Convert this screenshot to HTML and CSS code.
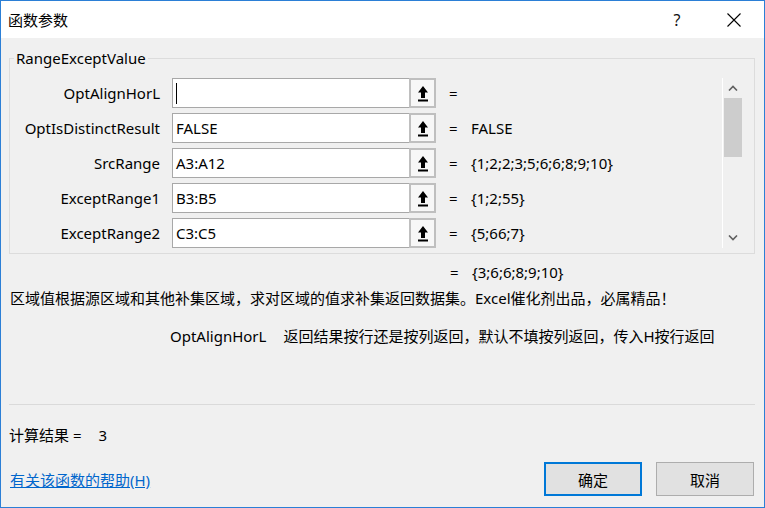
FILE: index.html
```html
<!DOCTYPE html>
<html lang="zh">
<head>
<meta charset="utf-8">
<title>函数参数</title>
<link rel="stylesheet" href="styles.css">
</head>
<body>
<div class="window">
  <div class="titlebar">
    <span class="title">函数参数</span>
    <span class="help">?</span>
    <span class="close">
      <svg width="14" height="14" viewBox="0 0 14 14"><path d="M0.5 0.5 L13.5 13.5 M13.5 0.5 L0.5 13.5" stroke="#000" stroke-width="1.1" fill="none"/></svg>
    </span>
  </div>
  <div class="content">
    <fieldset class="group">
      <legend class="legend">RangeExceptValue</legend>
      <div class="panel">
        <div class="rows">
          <div class="row">
            <label class="lbl">OptAlignHorL</label>
            <div class="field"><span class="caret"></span></div>
            <div class="pick"><svg width="12" height="17" viewBox="0 0 12 17"><path d="M6 1 L11 7.5 L8 7.5 L8 13 L4 13 L4 7.5 L1 7.5 Z" fill="#000"/><rect x="1" y="14.5" width="10" height="2" fill="#000"/></svg></div>
            <span class="eq">=</span><span class="val"></span>
          </div>
          <div class="row">
            <label class="lbl">OptIsDistinctResult</label>
            <div class="field">FALSE</div>
            <div class="pick"><svg width="12" height="17" viewBox="0 0 12 17"><path d="M6 1 L11 7.5 L8 7.5 L8 13 L4 13 L4 7.5 L1 7.5 Z" fill="#000"/><rect x="1" y="14.5" width="10" height="2" fill="#000"/></svg></div>
            <span class="eq">=</span><span class="val">FALSE</span>
          </div>
          <div class="row">
            <label class="lbl">SrcRange</label>
            <div class="field">A3:A12</div>
            <div class="pick"><svg width="12" height="17" viewBox="0 0 12 17"><path d="M6 1 L11 7.5 L8 7.5 L8 13 L4 13 L4 7.5 L1 7.5 Z" fill="#000"/><rect x="1" y="14.5" width="10" height="2" fill="#000"/></svg></div>
            <span class="eq">=</span><span class="val">{1;2;2;3;5;6;6;8;9;10}</span>
          </div>
          <div class="row">
            <label class="lbl">ExceptRange1</label>
            <div class="field">B3:B5</div>
            <div class="pick"><svg width="12" height="17" viewBox="0 0 12 17"><path d="M6 1 L11 7.5 L8 7.5 L8 13 L4 13 L4 7.5 L1 7.5 Z" fill="#000"/><rect x="1" y="14.5" width="10" height="2" fill="#000"/></svg></div>
            <span class="eq">=</span><span class="val">{1;2;55}</span>
          </div>
          <div class="row">
            <label class="lbl">ExceptRange2</label>
            <div class="field">C3:C5</div>
            <div class="pick"><svg width="12" height="17" viewBox="0 0 12 17"><path d="M6 1 L11 7.5 L8 7.5 L8 13 L4 13 L4 7.5 L1 7.5 Z" fill="#000"/><rect x="1" y="14.5" width="10" height="2" fill="#000"/></svg></div>
            <span class="eq">=</span><span class="val">{5;66;7}</span>
          </div>
        </div>
        <div class="scrollbar">
          <div class="sb-btn"><svg width="10" height="6" viewBox="0 0 10 6"><path d="M1 5.5 L5 1.5 L9 5.5" stroke="#606060" stroke-width="1.6" fill="none"/></svg></div>
          <div class="sb-track"><div class="sb-thumb"></div></div>
          <div class="sb-btn"><svg width="10" height="6" viewBox="0 0 10 6"><path d="M1 0.5 L5 4.5 L9 0.5" stroke="#606060" stroke-width="1.6" fill="none"/></svg></div>
        </div>
      </div>
    </fieldset>
    <div class="result-line"><span class="eq">=</span><span class="val">{3;6;6;8;9;10}</span></div>
    <div class="desc">区域值根据源区域和其他补集区域，求对区域的值求补集返回数据集。Excel催化剂出品，必属精品！</div>
    <div class="param-desc"><span class="pname">OptAlignHorL</span><span>返回结果按行还是按列返回，默认不填按列返回，传入H按行返回</span></div>
    <div class="sep"></div>
    <div class="calc">计算结果 =<span class="calc-val">3</span></div>
    <div class="footer">
      <a class="help-link" href="#">有关该函数的帮助(H)</a>
      <div class="buttons">
        <button class="btn btn-default">确定</button>
        <button class="btn">取消</button>
      </div>
    </div>
  </div>
</div>
</body>
</html>
```

FILE: styles.css
```css
html, body {
  margin: 0;
  padding: 0;
}
body {
  width: 765px;
  height: 508px;
  overflow: hidden;
  font-family: "Noto Sans", "Noto Sans CJK SC", sans-serif;
  font-size: 15px;
  color: #000;
}
.window {
  width: 765px;
  height: 508px;
  box-sizing: border-box;
  border: 1px solid #2b7fd6;
  display: flex;
  flex-direction: column;
  background: #f0f0f0;
}
.titlebar {
  height: 37px;
  background: #fff;
  display: flex;
  align-items: center;
  padding-left: 7px;
  flex-shrink: 0;
}
.title {
  font-family: "Noto Sans CJK SC", sans-serif;
  font-size: 15px;
  flex: 1;
}
.help {
  font-size: 16px;
  width: 12px;
  text-align: center;
  margin-right: 44px;
  color: #111;
}
.close {
  display: flex;
  width: 14px;
  height: 14px;
  margin-right: 23px;
}
.content {
  flex: 1;
  padding: 10px 9px 0 8px;
  display: flex;
  flex-direction: column;
}
.group {
  margin: 0;
  padding: 0 11px 3px 0;
  border: 1px solid #dcdcdc;
  min-width: 0;
}
.legend {
  margin-left: 4px;
  padding: 0 2px;
  line-height: 20px;
  height: 20px;
}
.panel {
  margin-top: 2px;
  padding: 8px 0 2px 0;
  display: flex;
}
.rows {
  flex: 1;
  display: flex;
  flex-direction: column;
  gap: 5px;
}
.row {
  height: 30px;
  display: flex;
  align-items: center;
}
.lbl {
  width: 150px;
  text-align: right;
  margin-right: 12px;
  white-space: nowrap;
}
.field {
  width: 233px;
  height: 28px;
  border: 1px solid #a8a8a8;
  background: #fff;
  display: flex;
  align-items: center;
  padding-left: 3px;
  box-sizing: content-box;
  border-right: none;
}
.caret {
  width: 1px;
  height: 21px;
  background: #000;
}
.pick {
  width: 23px;
  height: 26px;
  border: 2px solid #bfbfbf;
  background: #f7f7f7;
  display: flex;
  align-items: center;
  justify-content: center;
}
.eq {
  margin-left: 13px;
  width: 22px;
}
.val {
  white-space: nowrap;
}
.scrollbar {
  width: 19px;
  border-left: 1px solid #fff;
  display: flex;
  flex-direction: column;
  margin-right: 1px;
}
.sb-btn {
  height: 20px;
  display: flex;
  align-items: center;
  justify-content: center;
}
.sb-track {
  flex: 1;
}
.sb-thumb {
  height: 59px;
  background: #cdcdcd;
  margin-left: 1px;
}
.result-line {
  margin-top: 8px;
  line-height: 20px;
  display: flex;
  padding-left: 441px;
}
.result-line .eq {
  margin-left: 0;
}
.desc {
  margin-top: 6px;
  line-height: 20px;
  margin-left: 1px;
  white-space: nowrap;
}
.param-desc {
  margin-top: 18px;
  line-height: 20px;
  margin-left: 161px;
  display: flex;
  gap: 17px;
  white-space: nowrap;
}
.sep {
  margin-top: 58px;
  height: 1px;
  background: #dadada;
}
.calc {
  margin-top: 20px;
  line-height: 20px;
  white-space: nowrap;
}
.calc-val {
  margin-left: 17px;
}
.footer {
  margin-top: 17px;
  display: flex;
  align-items: center;
  justify-content: space-between;
}
.help-link {
  color: #0066cc;
  text-decoration: underline;
  margin-left: 1px;
}
.buttons {
  display: flex;
  gap: 14px;
  margin-right: 1px;
}
.btn {
  width: 98px;
  height: 34px;
  box-sizing: border-box;
  border: 1px solid #adadad;
  background: #e1e1e1;
  font-family: "Noto Sans CJK SC", sans-serif;
  font-size: 15px;
  color: #000;
  padding: 0;
}
.btn-default {
  border: 2px solid #0078d7;
}
```
